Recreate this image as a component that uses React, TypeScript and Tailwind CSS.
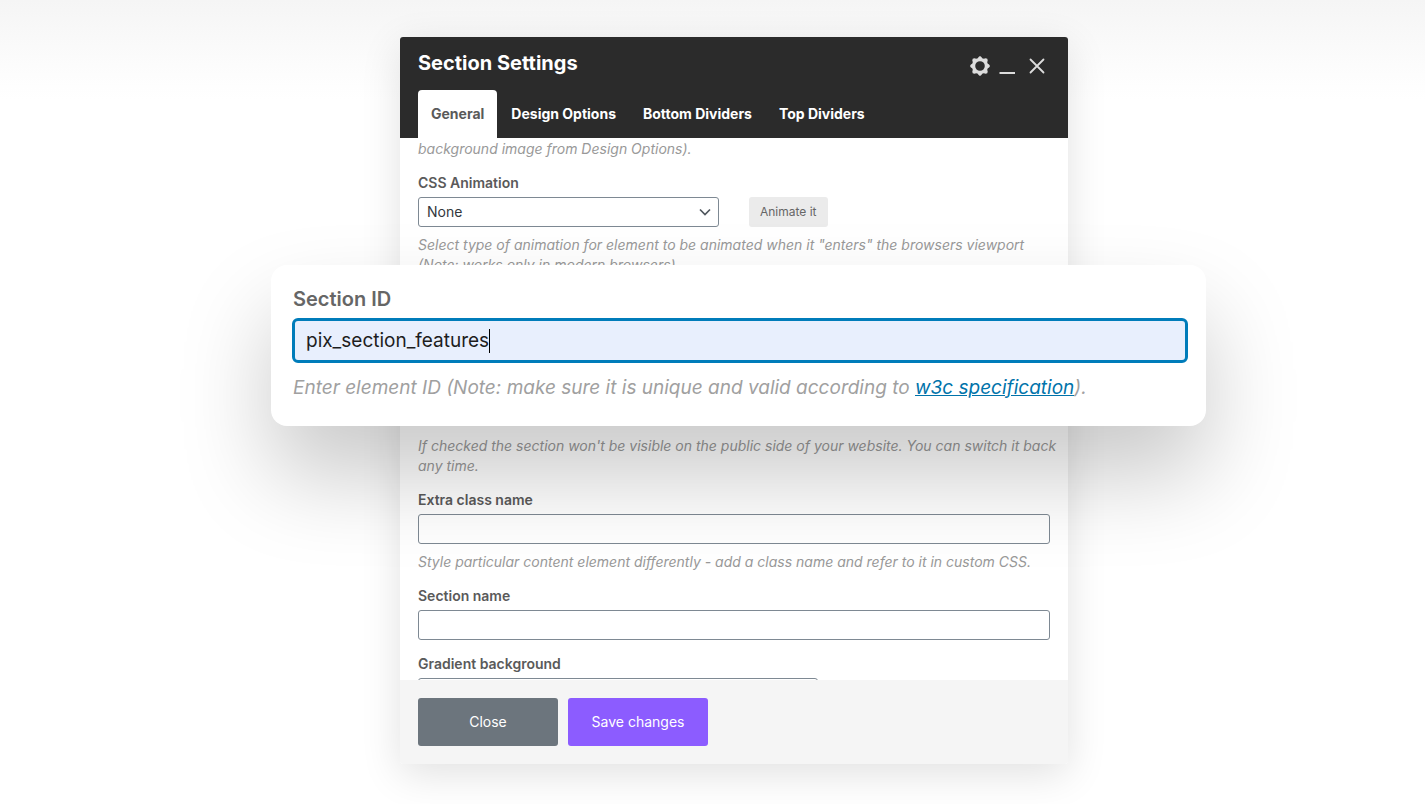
import { ReactNode, useState } from 'react';

const tabs = ['General', 'Design Options', 'Bottom Dividers', 'Top Dividers'];

const labelClass = 'block text-sm leading-5 font-semibold text-[#5a5a5a]';
const inputClass = 'h-[30px] rounded-[3px] border border-[#7e8993] bg-transparent px-2 text-sm text-[#32373c] outline-none';

const Hint = ({ children }: { children: ReactNode }) => (
  <p className="mt-2 -mr-3 text-sm leading-5 text-[#999] italic">{children}</p>
);

const Chevron = () => (
  <svg className="pointer-events-none absolute top-[9px] right-2 size-3" viewBox="0 0 12 12" fill="none" stroke="#50575e" strokeWidth="1.7">
    <path d="M1 3.5 6 8.5 11 3.5" />
  </svg>
);

/** Toothed ring used for the settings button */
const GearIcon = () => (
  <svg className="size-5" viewBox="0 0 20 20" fill="#dcdcdc">
    <path
      fillRule="evenodd"
      d="M8.6 0.9 10 0 11.4 0.9 12.2 2.2 13.8 2.8 15.6 2.3 17.3 2.7 17.7 4.4 17.2 6.2 17.8 7.8 19.1 8.6 20 10 19.1 11.4 17.8 12.2 17.2 13.8 17.7 15.6 17.3 17.3 15.6 17.7 13.8 17.2 12.2 17.8 11.4 19.1 10 20 8.6 19.1 7.8 17.8 6.2 17.2 4.4 17.7 2.7 17.3 2.3 15.6 2.8 13.8 2.2 12.2 0.9 11.4 0 10 0.9 8.6 2.2 7.8 2.8 6.2 2.3 4.4 2.7 2.7 4.4 2.3 6.2 2.8 7.8 2.2ZM10 5.2a4.8 4.8 0 1 0 0 9.6a4.8 4.8 0 1 0 0-9.6Z"
    />
  </svg>
);

const App = () => {
  const [activeTab, setActiveTab] = useState(0);
  const [sectionId, setSectionId] = useState('pix_section_features');

  return (
    <main className="flex h-screen justify-center overflow-hidden bg-white bg-[linear-gradient(#f5f5f5,#fdfdfd_75px,#fff_100px)] pt-[37px] pb-10 pl-[43px] font-[Inter,sans-serif]">
      <section className="relative flex h-full w-[668px] flex-col rounded-[3px] bg-white shadow-[0_10px_40px_rgba(0,0,0,0.12)]">

        <header className="flex h-[101px] shrink-0 flex-col justify-between rounded-t-[3px] bg-[#2b2b2b] px-[18px]">
          <div className="flex justify-between pt-[14px]">
            <h1 className="text-xl leading-6 font-bold text-white">Section Settings</h1>
            <div className="flex h-[30px] items-center gap-2 pr-[3px]">
              <button type="button" aria-label="Settings"><GearIcon /></button>
              <button type="button" aria-label="Minimize">
                <svg className="h-5 w-[18px]" viewBox="0 0 18 20" stroke="#dcdcdc" strokeWidth="2">
                  <path d="M1.5 17H17" />
                </svg>
              </button>
              <button type="button" aria-label="Close panel" className="ml-[3px]">
                <svg className="size-5" viewBox="0 0 20 20" stroke="#dcdcdc" strokeWidth="1.8" strokeLinecap="round">
                  <path d="M3.5 3.5 16.5 16.5M16.5 3.5 3.5 16.5" />
                </svg>
              </button>
            </div>
          </div>
          <nav className="flex gap-px">
            {tabs.map((tab, index) => (
              <button
                key={tab}
                type="button"
                onClick={() => setActiveTab(index)}
                className={
                  'h-12 rounded-t-[4px] px-[13px] text-sm font-bold ' +
                  (index === activeTab ? 'bg-white text-[#5a5a5a]' : 'text-white')
                }
              >
                {tab}
              </button>
            ))}
          </nav>
        </header>

        <div className="min-h-0 flex-1 overflow-hidden px-[18px] pt-px">
          <p className="text-sm leading-5 text-[#999] italic">background image from Design Options).</p>

          <div className="mt-[14px]">
            <label htmlFor="animation" className={labelClass}>CSS Animation</label>
            <div className="mt-1 flex gap-[30px]">
              <div className="relative w-[301px]">
                <select id="animation" className={inputClass + ' w-full appearance-none'}>
                  <option>None</option>
                </select>
                <Chevron />
              </div>
              <button type="button" className="h-[30px] rounded-[3px] bg-[#ebebeb] px-[11px] text-xs text-[#666]">Animate it</button>
            </div>
            <Hint>Select type of animation for element to be animated when it "enters" the browsers viewport (Note: works only in modern browsers).</Hint>
          </div>

          {/* room left for the raised Section ID card */}
          <div className="h-[153px]" />
          <Hint>If checked the section won't be visible on the public side of your website. You can switch it back any time.</Hint>

          <div className="mt-[14px]">
            <label htmlFor="class-name" className={labelClass}>Extra class name</label>
            <input id="class-name" type="text" className={inputClass + ' mt-1 block w-full'} />
            <Hint>Style particular content element differently - add a class name and refer to it in custom CSS.</Hint>
          </div>

          <div className="mt-[14px]">
            <label htmlFor="section-name" className={labelClass}>Section name</label>
            <input id="section-name" type="text" className={inputClass + ' mt-1 block w-full'} />
          </div>

          <div className="mt-[14px]">
            <label htmlFor="gradient" className={labelClass}>Gradient background</label>
            <select id="gradient" className={inputClass + ' mt-1 block w-[400px] appearance-none'} />
          </div>
        </div>

        <footer className="flex h-[84px] shrink-0 items-center gap-[10px] rounded-b-[3px] bg-[#f5f5f5] px-[18px]">
          <button type="button" className="h-12 w-[140px] rounded-[3px] bg-[#6c757d] text-sm text-white">Close</button>
          <button type="button" className="h-12 w-[140px] rounded-[3px] bg-[#8c5cff] text-sm text-white">Save changes</button>
        </footer>

        {/* Section ID card, lifted above the panel */}
        <div className="absolute top-[228px] -right-[138px] -left-[129px] h-[161px] rounded-2xl bg-white pt-[22px] pr-[18px] pl-[21px] shadow-[0_50px_90px_rgba(0,0,0,0.21)]">
          <label htmlFor="section-id" className="block px-px text-xl leading-6 font-semibold text-[#666]">Section ID</label>
          <div className="mt-[7px] flex h-[45px] items-center rounded-md border-3 border-[#007cba] bg-[#e8effd] px-[11px]">
            <input
              id="section-id"
              type="text"
              value={sectionId}
              onChange={(e) => setSectionId(e.target.value)}
              className="field-sizing-content text-[19px] leading-[29px] text-[#1d1d1d] outline-none"
            />
            <span className="h-6 w-px bg-black" />
          </div>
          <p className="mt-[13px] px-px text-[19px] leading-6 text-[#a0a0a0] italic">
            Enter element ID (Note: make sure it is unique and valid according to{' '}
            <a href="#" className="text-[#0073aa] underline">w3c specification</a>).
          </p>
        </div>
      </section>
    </main>
  );
};

export default App;
